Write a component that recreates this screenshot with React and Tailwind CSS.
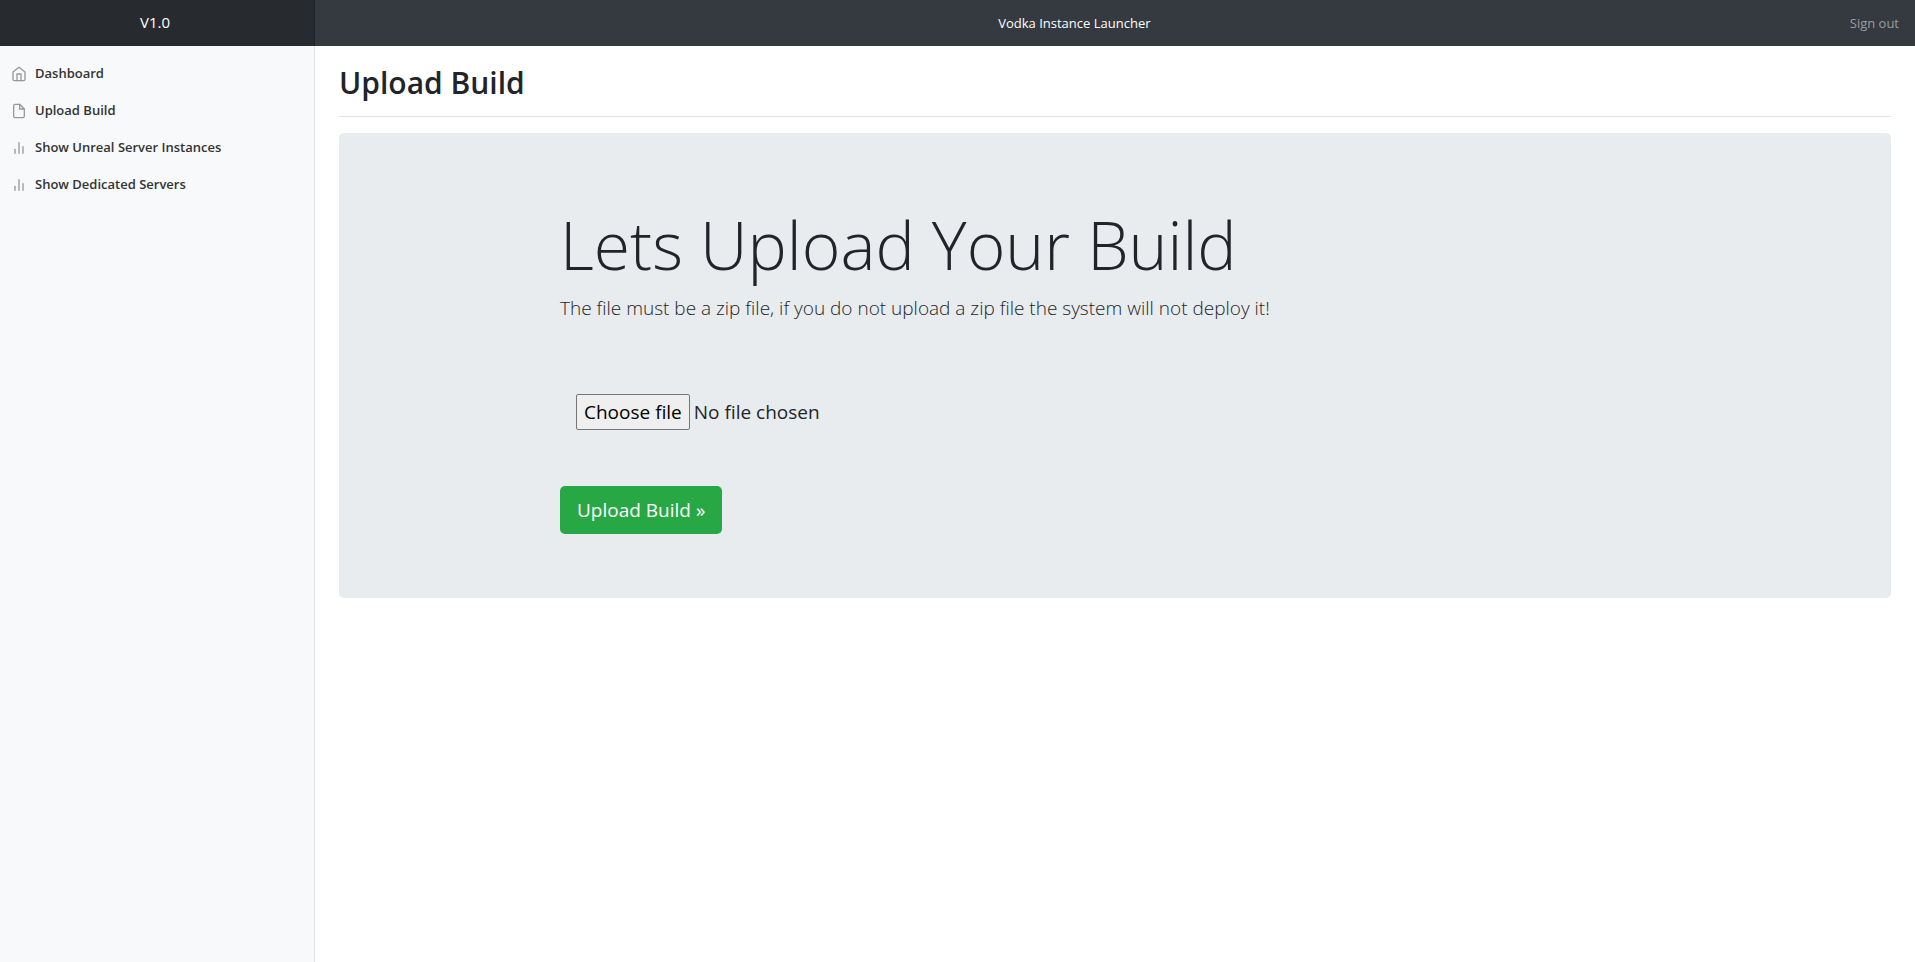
import React, { useState } from 'react';

function Icon({ children }) {
  return (
    <svg
      className="size-4 shrink-0 text-[#999999]"
      viewBox="0 0 24 24"
      fill="none"
      stroke="currentColor"
      strokeWidth="2"
      strokeLinecap="round"
      strokeLinejoin="round"
      aria-hidden="true"
    >
      {children}
    </svg>
  );
}

const HomeIcon = () => (
  <Icon>
    <path d="M3 9l9-7 9 7v11a2 2 0 0 1-2 2H5a2 2 0 0 1-2-2z" />
    <polyline points="9 22 9 12 15 12 15 22" />
  </Icon>
);

const FileIcon = () => (
  <Icon>
    <path d="M13 2H6a2 2 0 0 0-2 2v16a2 2 0 0 0 2 2h12a2 2 0 0 0 2-2V9z" />
    <polyline points="13 2 13 9 20 9" />
  </Icon>
);

const BarsIcon = () => (
  <Icon>
    <line x1="18" y1="20" x2="18" y2="10" />
    <line x1="12" y1="20" x2="12" y2="4" />
    <line x1="6" y1="20" x2="6" y2="14" />
  </Icon>
);

const links = [
  { label: 'Dashboard', icon: HomeIcon },
  { label: 'Upload Build', icon: FileIcon },
  { label: 'Show Unreal Server Instances', icon: BarsIcon },
  { label: 'Show Dedicated Servers', icon: BarsIcon },
];

export default function App() {
  const [fileName, setFileName] = useState('');

  return (
    <div className="flex min-h-screen flex-col bg-white font-['Open_Sans',sans-serif] text-[#212529]">
      <header className="flex h-[46px] items-center bg-[#343a40] text-[13px]">
        <a
          href="#"
          className="flex h-full w-1/6 min-w-[200px] max-w-[315px] items-center justify-center border-r border-[#1e2125] bg-[#272b30] pr-1 pb-0.5 text-[15px] text-white"
        >
          V1.0
        </a>
        <p className="flex-1 pt-0.5 text-center text-white">Vodka Instance Launcher</p>
        <a href="#" className="px-4 pt-0.5 text-[#9a9da0]">
          Sign out
        </a>
      </header>

      <div className="flex flex-1">
        <nav className="w-1/6 min-w-[200px] max-w-[315px] border-r border-[#dee2e6] bg-[#f8f9fa] pt-[9px]">
          <ul>
            {links.map(({ label, icon: LinkIcon }) => (
              <li key={label}>
                <a href="#" className="flex h-[37px] items-center gap-2 px-[11px] text-[13px] font-semibold text-[#333333]">
                  <LinkIcon />
                  {label}
                </a>
              </li>
            ))}
          </ul>
        </nav>

        <main className="flex-1 px-6 pt-[18px]">
          <h1 className="mb-4 border-b border-[#dee2e6] pb-[14px] text-[30px] leading-[38px] font-semibold">
            Upload Build
          </h1>

          <section className="rounded-[5px] bg-[#e9ecef] px-8 py-16">
            <div className="mx-auto max-w-[1140px] px-[15px]">
              <h2 className="mb-1.5 pt-1 text-[66px] leading-[86px] font-light">Lets Upload Your Build</h2>
              <p className="text-[19px] leading-[30px] font-light">
                The file must be a zip file, if you do not upload a zip file the system will not deploy it!
              </p>
              <form onSubmit={(event) => event.preventDefault()}>
                <div className="mt-[71px] flex items-center gap-1 px-4 text-[19px] leading-[30px]">
                  <input
                    id="build-file"
                    type="file"
                    className="peer sr-only"
                    onChange={(event) => setFileName(event.target.files[0]?.name ?? '')}
                  />
                  <label
                    htmlFor="build-file"
                    className="rounded-[2px] border border-[#767676] bg-[#efefef] px-[7px] py-0.5 text-black peer-focus-visible:outline-2"
                  >
                    Choose file
                  </label>
                  <span>{fileName || 'No file chosen'}</span>
                </div>
                <button
                  type="submit"
                  className="mt-14 h-12 rounded-[5px] bg-[#28a745] px-[17px] text-[19px] leading-[30px] text-white"
                >
                  Upload Build »
                </button>
              </form>
            </div>
          </section>
        </main>
      </div>
    </div>
  );
}
